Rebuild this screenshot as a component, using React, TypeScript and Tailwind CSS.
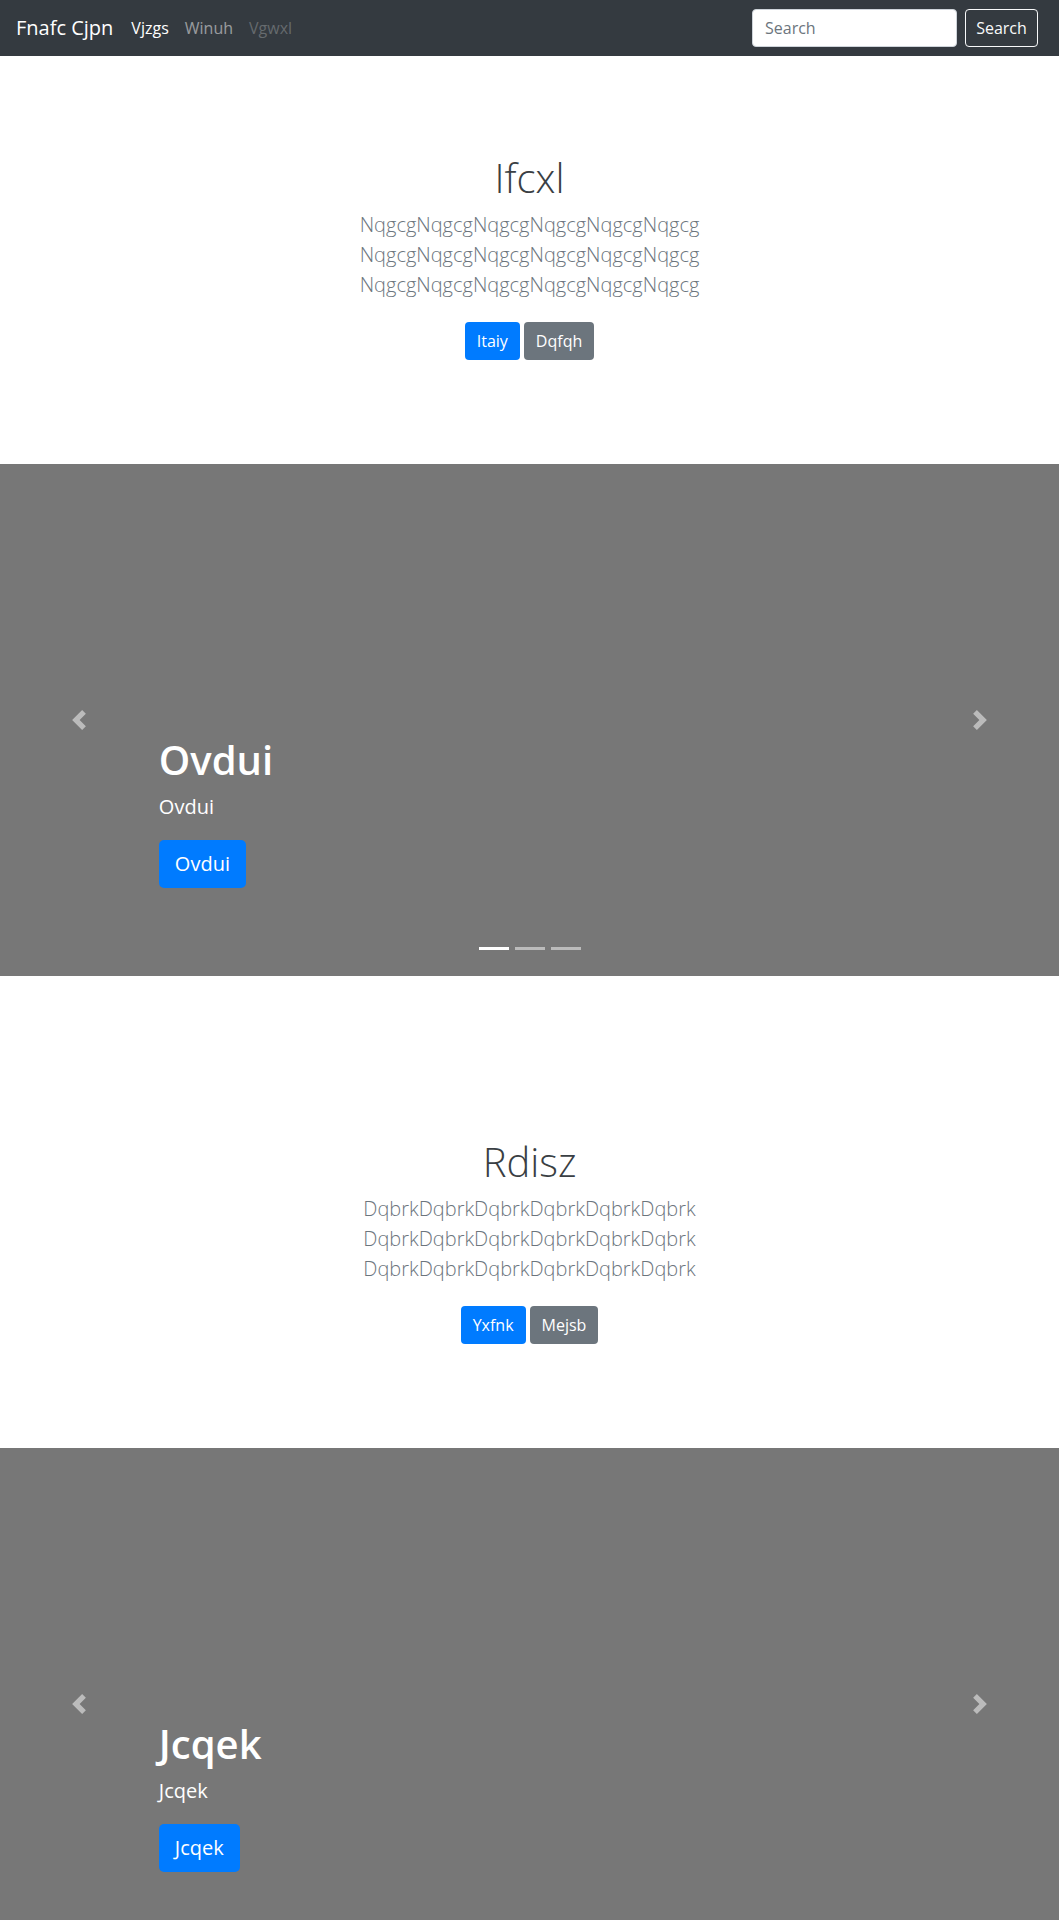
import React from "react";

const font = { fontFamily: '"Open Sans", "Noto Sans", "Liberation Sans", sans-serif' };

function Navbar() {
  return (
    <nav className="flex h-[56px] items-center justify-between bg-[#343a40] pl-4 pr-[21px]">
      <div className="flex items-center">
        <a className="mr-[10px] text-[20px] leading-[30px] text-white">Fnafc Cjpn</a>
        <ul className="flex items-center text-[16px] leading-[24px]">
          <li className="px-2 text-white">Vjzgs</li>
          <li className="px-2 text-[rgba(255,255,255,0.5)]">Winuh</li>
          <li className="px-2 text-[rgba(255,255,255,0.25)]">Vgwxl</li>
        </ul>
      </div>
      <form className="flex items-center gap-2">
        <input
          className="h-[38px] w-[205px] rounded-[4px] border border-[#ced4da] bg-white px-3 text-[16px] text-[#495057] placeholder:text-[#6c757d] outline-none"
          placeholder="Search"
          style={font}
        />
        <button
          type="button"
          className="h-[38px] w-[73px] rounded-[4px] border border-[#f8f9fa] text-[16px] text-[#f8f9fa]"
        >
          Search
        </button>
      </form>
    </nav>
  );
}

function Jumbo({
  title,
  word,
  primary,
  secondary,
  top,
}: {
  title: string;
  word: string;
  primary: string;
  secondary: string;
  top: string;
}) {
  const line = word.repeat(6);
  return (
    <section className={`flex flex-col items-center bg-white pb-[104px] text-center ${top}`}>
      <h1 className="mb-2 text-[40px] font-light leading-[48px] text-[#3a3f44]">{title}</h1>
      <p className="mx-auto mb-[22px] max-w-[500px] text-[20px] font-light leading-[30px] text-[#6c757d]">
        {line} {line} {line}
      </p>
      <div className="flex gap-1">
        <button className="h-[38px] rounded-[4px] bg-[#007bff] px-3 text-[16px] text-white">
          {primary}
        </button>
        <button className="h-[38px] rounded-[4px] bg-[#6c757d] px-3 text-[16px] text-white">
          {secondary}
        </button>
      </div>
    </section>
  );
}

function Chevron({ dir }: { dir: "prev" | "next" }) {
  return (
    <svg width="20" height="20" viewBox="0 0 8 8" fill="#fff" opacity="0.5">
      {dir === "prev" ? (
        <path d="M5.25 0l-4 4 4 4 1.5-1.5L4.25 4l2.5-2.5L5.25 0z" />
      ) : (
        <path d="M2.75 0l-1.5 1.5L3.75 4l-2.5 2.5L2.75 8l4-4-4-4z" />
      )}
    </svg>
  );
}

function Carousel({ label }: { label: string }) {
  return (
    <section className="relative flex h-[512px] flex-col justify-end bg-[#777777] px-[15%] pb-[88px]">
      <div className="absolute inset-y-0 left-0 flex w-[15%] items-center justify-center">
        <Chevron dir="prev" />
      </div>
      <div className="absolute inset-y-0 right-0 flex w-[15%] items-center justify-center">
        <Chevron dir="next" />
      </div>
      <div className="relative z-10 text-left text-white">
        <h1 className="mb-2 text-[40px] font-semibold leading-[48px]">{label}</h1>
        <p className="mb-[18px] text-[20px] leading-[30px]">{label}</p>
        <button className="h-[48px] rounded-[5px] bg-[#007bff] px-4 text-[20px] text-white">
          {label}
        </button>
      </div>
      <ol className="absolute bottom-[26px] left-0 right-0 flex justify-center gap-[6px]">
        <li className="h-[3px] w-[30px] bg-white" />
        <li className="h-[3px] w-[30px] bg-[rgba(255,255,255,0.5)]" />
        <li className="h-[3px] w-[30px] bg-[rgba(255,255,255,0.5)]" />
      </ol>
    </section>
  );
}

export default function App() {
  return (
    <div className="w-full bg-white" style={font}>
      <Navbar />
      <Jumbo title="Ifcxl" word="Nqgcg" primary="Itaiy" secondary="Dqfqh" top="pt-[98px]" />
      <Carousel label="Ovdui" />
      <Jumbo title="Rdisz" word="Dqbrk" primary="Yxfnk" secondary="Mejsb" top="pt-[162px]" />
      <Carousel label="Jcqek" />
    </div>
  );
}
